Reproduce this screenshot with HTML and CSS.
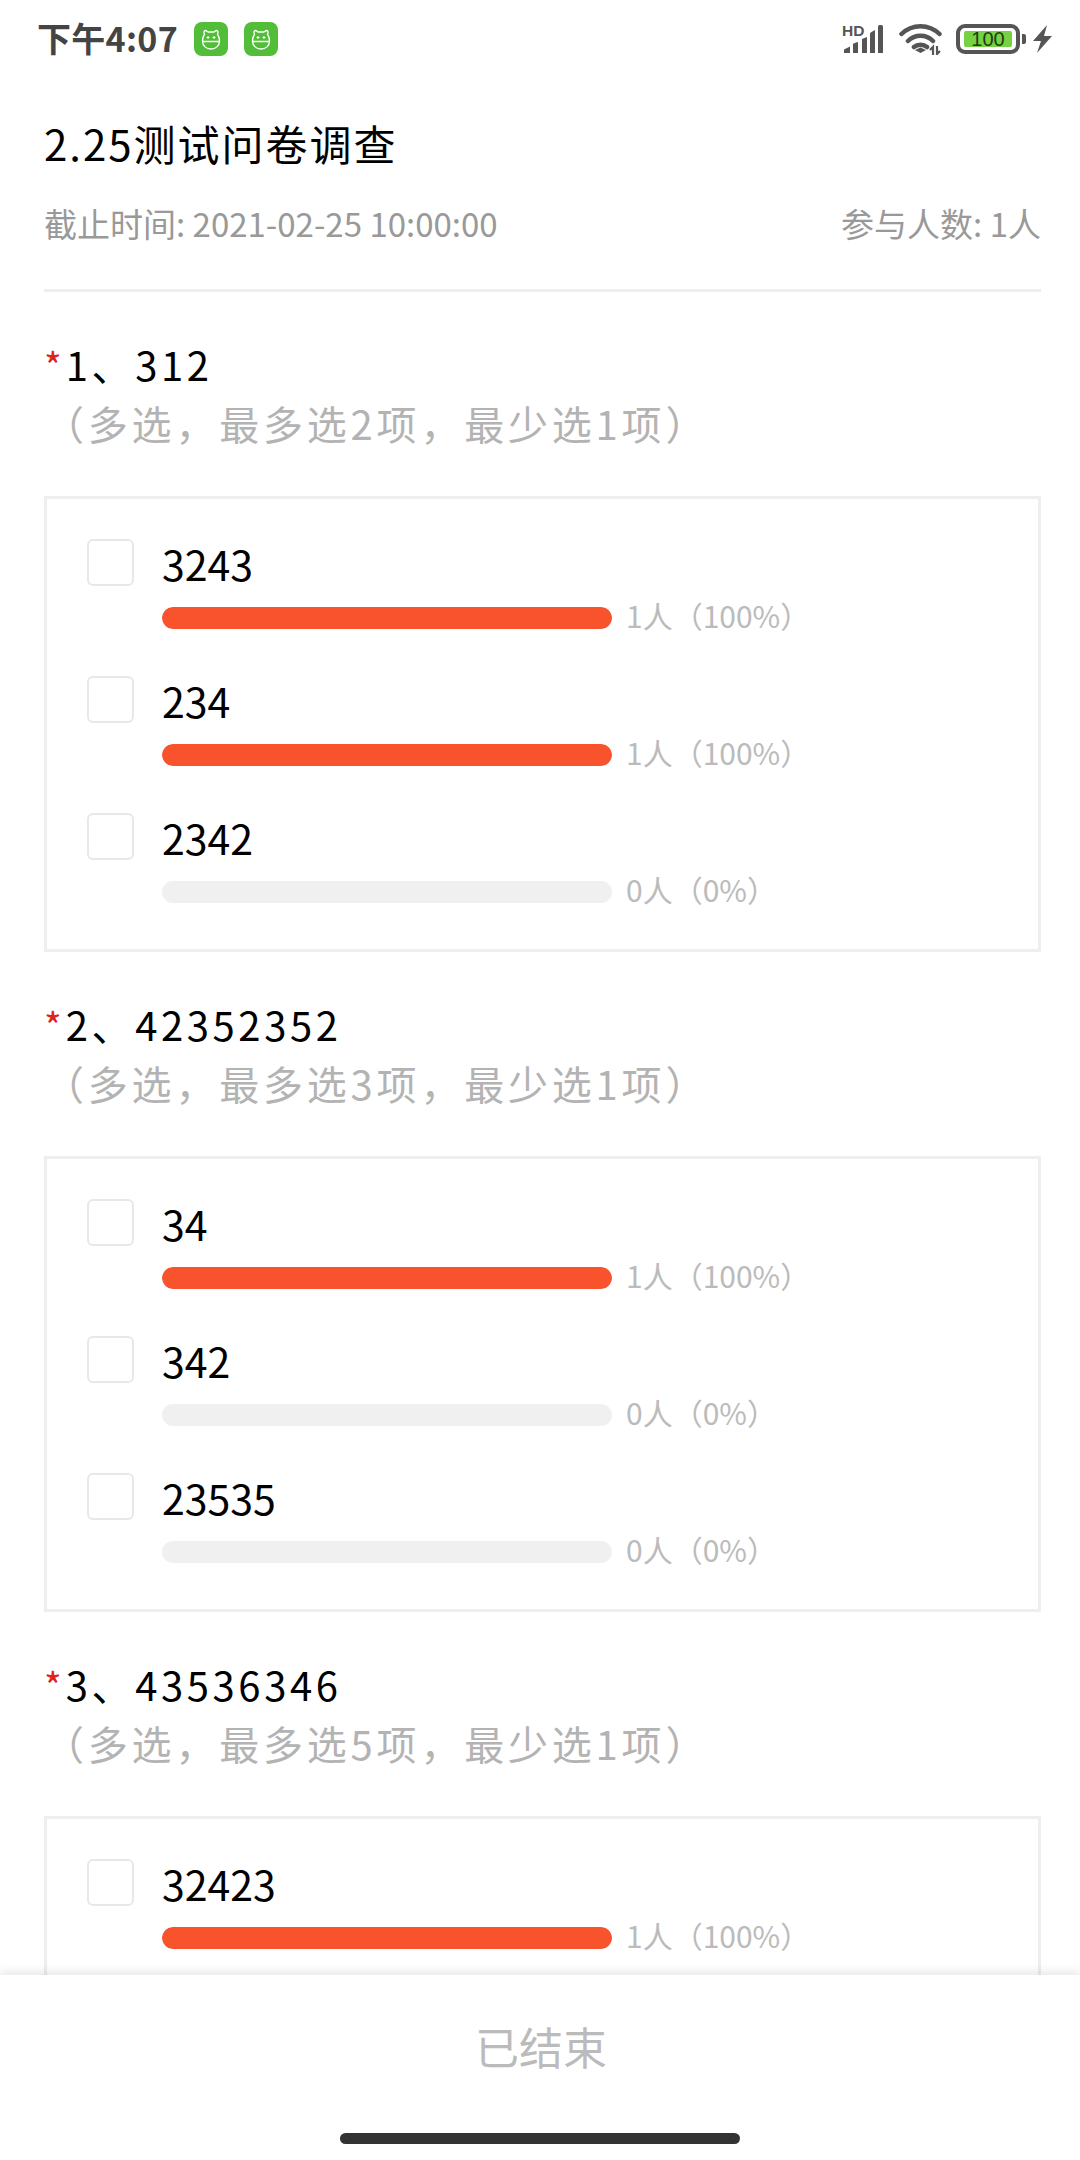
FILE: index.html
```html
<!DOCTYPE html>
<html lang="zh-CN">
<head>
    <meta charset="UTF-8">
    <meta name="viewport" content="width=device-width, initial-scale=1.0">
    <title>2.25测试问卷调查</title>
    <link rel="stylesheet" href="styles.css">
</head>
<body>
    <div class="page">
        <div class="status-bar">
            <div class="status-left">
                <span class="time">下午4:07</span>
                <svg class="app-icon" viewBox="0 0 34 34">
                    <rect width="34" height="34" rx="8" fill="#52bd38"/>
                    <path d="M10.500 12.500 C9.500 10 10 8.500 11.500 8.500 C12.500 8.500 13 9.500 14 10 H20 C21 9.500 21.500 8.500 22.500 8.500 C24 8.500 24.500 10 23.500 12.500 C25 14 25.500 16 25.500 19 C25.500 24 21.500 27 17 27 C12.500 27 8.500 24 8.500 19 C8.500 16 9 14 10.500 12.500 Z M8.500 19.500 H25.500" fill="none" stroke="#fff" stroke-width="1.300"/>
                    <path d="M12.500 15.500 h3 M14 14 v3 M18.500 15.500 h3 M20 14 v3" stroke="#fff" stroke-width="1"/>
                </svg>
                <svg class="app-icon" viewBox="0 0 34 34">
                    <rect width="34" height="34" rx="8" fill="#52bd38"/>
                    <path d="M10.500 12.500 C9.500 10 10 8.500 11.500 8.500 C12.500 8.500 13 9.500 14 10 H20 C21 9.500 21.500 8.500 22.500 8.500 C24 8.500 24.500 10 23.500 12.500 C25 14 25.500 16 25.500 19 C25.500 24 21.500 27 17 27 C12.500 27 8.500 24 8.500 19 C8.500 16 9 14 10.500 12.500 Z M8.500 19.500 H25.500" fill="none" stroke="#fff" stroke-width="1.300"/>
                    <path d="M12.500 15.500 h3 M14 14 v3 M18.500 15.500 h3 M20 14 v3" stroke="#fff" stroke-width="1"/>
                </svg>
            </div>
            <div class="status-right">
                <svg class="sig-icon" width="42" height="36" viewBox="0 -3 42 36">
                    <text x="0" y="11.500" font-family="Liberation Sans, sans-serif" font-size="15.500" font-weight="700" fill="#555">HD</text>
                    <path d="M2 29 V25.500 L8 22.500 V29 Z M11 29 V20 Q11 19.500 11.500 19.500 L15.500 18 Q16 18 16 18.500 V29 Z M20 29 V15 L25 13 V29 Z M28 29 V10 Q28 8.500 29.500 8 L33 6 V29 Z M36 29 V3 Q36 1 37.500 1 H39.500 Q41 1 41 3 V29 Z" fill="#555"/>
                </svg>
                <svg class="wifi-icon" width="44" height="32" viewBox="0 0 44 32">
                    <path d="M2.500 11 C13 0.500 30 0.500 40.500 11 M9 18 C16 11 27 11 34 18 M15 24 C18.500 21 24.500 21 28 24" fill="none" stroke="#555" stroke-width="4.500" stroke-linecap="round"/>
                    <path d="M16 27 L21.500 24.500 L27 27 L21.500 30 Z" fill="#555"/>
                    <path d="M34 32 V24 L31 27 M38 23 V31 L41 28" fill="none" stroke="#555" stroke-width="2.200"/>
                </svg>
                <div class="battery">
                    <div class="battery-body"><span class="battery-level">100</span></div>
                    <div class="battery-cap"></div>
                </div>
                <svg class="bolt-icon" width="20" height="30" viewBox="0 0 20 30">
                    <path d="M14 1 L0 17 H8 L4 29 L19 12 H11 Z" fill="#555"/>
                </svg>
            </div>
        </div>

        <div class="content">
            <div class="survey-head">
                <h1 class="survey-title">2.25测试问卷调查</h1>
                <div class="survey-meta">
                    <span>截止时间: 2021-02-25 10:00:00</span>
                    <span>参与人数: 1人</span>
                </div>
            </div>

            <div class="question">
                <div class="question-title"><span class="required">*</span>1、312</div>
                <div class="question-hint">（多选，最多选2项，最少选1项）</div>
                <div class="options">
                    <div class="option">
                        <div class="checkbox"></div>
                        <div class="option-body">
                            <div class="option-name">3243</div>
                            <div class="result"><div class="bar"><div class="bar-fill full"></div></div><span class="result-text">1人（100%）</span></div>
                        </div>
                    </div>
                    <div class="option">
                        <div class="checkbox"></div>
                        <div class="option-body">
                            <div class="option-name">234</div>
                            <div class="result"><div class="bar"><div class="bar-fill full"></div></div><span class="result-text">1人（100%）</span></div>
                        </div>
                    </div>
                    <div class="option">
                        <div class="checkbox"></div>
                        <div class="option-body">
                            <div class="option-name">2342</div>
                            <div class="result"><div class="bar"></div><span class="result-text">0人（0%）</span></div>
                        </div>
                    </div>
                </div>
            </div>

            <div class="question">
                <div class="question-title"><span class="required">*</span>2、42352352</div>
                <div class="question-hint">（多选，最多选3项，最少选1项）</div>
                <div class="options">
                    <div class="option">
                        <div class="checkbox"></div>
                        <div class="option-body">
                            <div class="option-name">34</div>
                            <div class="result"><div class="bar"><div class="bar-fill full"></div></div><span class="result-text">1人（100%）</span></div>
                        </div>
                    </div>
                    <div class="option">
                        <div class="checkbox"></div>
                        <div class="option-body">
                            <div class="option-name">342</div>
                            <div class="result"><div class="bar"></div><span class="result-text">0人（0%）</span></div>
                        </div>
                    </div>
                    <div class="option">
                        <div class="checkbox"></div>
                        <div class="option-body">
                            <div class="option-name">23535</div>
                            <div class="result"><div class="bar"></div><span class="result-text">0人（0%）</span></div>
                        </div>
                    </div>
                </div>
            </div>

            <div class="question">
                <div class="question-title"><span class="required">*</span>3、43536346</div>
                <div class="question-hint">（多选，最多选5项，最少选1项）</div>
                <div class="options">
                    <div class="option">
                        <div class="checkbox"></div>
                        <div class="option-body">
                            <div class="option-name">32423</div>
                            <div class="result"><div class="bar"><div class="bar-fill full"></div></div><span class="result-text">1人（100%）</span></div>
                        </div>
                    </div>
                </div>
            </div>
        </div>

        <div class="footer">
            <div class="footer-label">已结束</div>
            <div class="home-bar"></div>
        </div>
    </div>
</body>
</html>
```

FILE: styles.css
```css
* {
    box-sizing: border-box;
}
body {
    margin: 0;
    background-color: #fff;
    font-family: "Noto Sans CJK SC", "Noto Sans", sans-serif;
}
.page {
    width: 1080px;
    height: 2160px;
    display: flex;
    flex-direction: column;
    overflow: hidden;
}

/* status bar */
.status-bar {
    height: 78px;
    flex: none;
    display: flex;
    justify-content: space-between;
    align-items: center;
    padding: 0 27px 0 37px;
}
.status-left {
    display: flex;
    align-items: center;
}
.time {
    font-size: 34px;
    font-weight: 700;
    line-height: 40px;
    letter-spacing: 0.300px;
    color: #444;
    margin-right: 16px;
    margin-top: -2px;
}
.app-icon {
    width: 34px;
    height: 34px;
    margin-right: 16px;
}
.status-right {
    display: flex;
    align-items: center;
}
.sig-icon {
    margin-right: 15px;
}
.wifi-icon {
    margin-right: 13px;
}
.battery {
    display: flex;
    align-items: center;
    margin-right: 7px;
}
.battery-body {
    width: 64px;
    height: 30px;
    border: 4px solid #555;
    border-radius: 9px;
    padding: 3px 4px;
}
.battery-level {
    display: block;
    height: 16px;
    background-color: #76d143;
    border-radius: 2px;
    font-family: "Liberation Sans", sans-serif;
    font-size: 20px;
    line-height: 16px;
    text-align: center;
    color: #223d14;
}
.battery-cap {
    width: 4px;
    height: 10px;
    margin-left: 2px;
    background-color: #555;
    border-radius: 0 2px 2px 0;
}

/* survey */
.content {
    flex: 1;
    min-height: 0;
    overflow: hidden;
    padding: 0 39px 0 44px;
}
.survey-head {
    border-bottom: 3px solid #eee;
    height: 214px;
}
.survey-title {
    margin: 0;
    padding-top: 36px;
    font-size: 42px;
    font-weight: 400;
    line-height: 58px;
    letter-spacing: 2px;
    color: #000;
}
.survey-meta {
    margin-top: 28px;
    display: flex;
    justify-content: space-between;
    font-size: 33px;
    line-height: 46px;
    color: #999;
}
.question {
    padding-top: 42px;
}
.question-title {
    font-size: 40px;
    line-height: 60px;
    letter-spacing: 3.600px;
    color: #000;
}
.required {
    color: #e2231a;
    font-size: 38px;
    line-height: 1;
    vertical-align: 0;
    letter-spacing: 0;
    margin-right: 4px;
}
.question-hint {
    font-size: 40px;
    line-height: 58px;
    letter-spacing: 3.800px;
    color: #b3b3b3;
}
.options {
    margin-top: 44px;
    height: 456px;
    border: 3px solid #eee;
    padding: 40px 40px 0;
}
.option {
    display: flex;
    height: 137px;
}
.checkbox {
    width: 47px;
    height: 47px;
    border: 2px solid #e8e8e8;
    border-radius: 6px;
    margin-right: 28px;
    flex: none;
}
.option-name {
    font-size: 41px;
    line-height: 48px;
    color: #000;
}
.result {
    display: flex;
    align-items: flex-start;
    margin-top: 10px;
}
.bar {
    width: 450px;
    height: 22px;
    margin-top: 10px;
    background-color: #f0f0f0;
    border-radius: 11px;
    overflow: hidden;
}
.bar-fill {
    height: 100%;
    background-color: #f9532d;
    border-radius: 11px;
}
.bar-fill.full {
    width: 100%;
}
.result-text {
    margin-left: 14px;
    font-size: 30px;
    line-height: 36px;
    color: #bbb;
}

/* footer */
.footer {
    position: relative;
    flex: none;
    height: 185px;
    background-color: #fff;
    box-shadow: 0 -3px 10px rgba(0, 0, 0, 0.1);
    display: flex;
    flex-direction: column;
    align-items: center;
}
.footer-label {
    margin-top: 39px;
    padding-left: 2px;
    font-size: 44px;
    line-height: 64px;
    color: #bbb;
}
.home-bar {
    margin-top: 55px;
    width: 400px;
    height: 11px;
    border-radius: 6px;
    background-color: #333;
}
```
